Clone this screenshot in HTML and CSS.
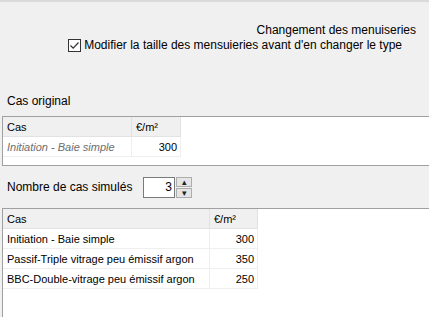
FILE: index.html
```html
<!DOCTYPE html>
<html lang="fr">
<head>
    <meta charset="UTF-8">
    <title>Changement des menuiseries</title>
    <link rel="stylesheet" href="styles.css">
</head>
<body>
    <div class="top">
        <div class="options">
            <div class="opt-title">Changement des menuiseries</div>
            <label class="check">
                <span class="box">
                    <svg width="11" height="11" viewBox="0 0 11 11"><path d="M1.5 5.5 L4.2 8.2 L9.5 2.5" fill="none" stroke="#333" stroke-width="1.2"/></svg>
                </span>
                Modifier la taille des mensuieries avant d'en changer le type
            </label>
        </div>
    </div>

    <div class="section-label">Cas original</div>
    <div class="grid grid-orig">
        <table>
            <tr><th class="c1">Cas</th><th class="c2">€/m²</th></tr>
            <tr><td class="c1 muted">Initiation - Baie simple</td><td class="c2 num">300</td></tr>
        </table>
    </div>

    <div class="count-row">
        <span class="count-label">Nombre de cas simulés</span>
        <span class="spin">
            <span class="spin-value">3</span>
            <span class="spin-btns">
                <span class="spin-btn">&#9652;</span>
                <span class="spin-btn">&#9662;</span>
            </span>
        </span>
    </div>

    <div class="grid grid-sim">
        <table>
            <tr><th class="c1">Cas</th><th class="c2">€/m²</th></tr>
            <tr><td class="c1">Initiation - Baie simple</td><td class="c2 num">300</td></tr>
            <tr><td class="c1">Passif-Triple vitrage peu émissif argon</td><td class="c2 num">350</td></tr>
            <tr><td class="c1">BBC-Double-vitrage peu émissif argon</td><td class="c2 num">250</td></tr>
        </table>
    </div>
</body>
</html>
```

FILE: styles.css
```css
body {
    margin: 0;
    background-color: #f0f0f0;
    font-family: "Liberation Sans", Arial, sans-serif;
    font-size: 12px;
    color: #000;
    height: 317px;
    overflow: hidden;
}
.top {
    border-top: 2px solid #dadada;
    height: 86px;
}
.options {
    display: flex;
    flex-direction: column;
    align-items: flex-end;
    padding-top: 21px;
    padding-right: 13px;
}
.opt-title {
    line-height: 14px;
}
.check {
    display: flex;
    align-items: center;
    gap: 3px;
    line-height: 16px;
    margin-right: 14px;
}
.box {
    width: 11px;
    height: 11px;
    border: 1px solid #333;
    background-color: #fff;
    display: flex;
}
.section-label {
    padding: 5px 7px 0;
    line-height: 16px;
    height: 23px;
}
.grid {
    background-color: #fff;
    border-top: 1px solid #a0a0a0;
    border-left: 1px solid #a0a0a0;
    margin-left: 2px;
}
.grid-orig {
    height: 48px;
    border-bottom: 1px solid #a0a0a0;
}
.grid-sim {
    height: 120px;
}
table {
    border-collapse: collapse;
    font-family: "Liberation Sans", Arial, sans-serif;
    font-size: 11px;
}
th, td {
    height: 19px;
    padding: 0 4px;
    text-align: left;
    font-weight: normal;
    white-space: nowrap;
}
th {
    background-color: #f0f0f0;
    border-right: 1px solid #e2e2e2;
    border-bottom: 1px solid #e2e2e2;
}
td {
    border-right: 1px solid #efefef;
    border-bottom: 1px solid #efefef;
}
.grid-orig .c1 { width: 120px; }
.grid-orig .c2 { width: 40px; }
.grid-sim .c1 { width: 198px; }
.grid-sim .c2 { width: 39px; }
.num {
    text-align: right;
    padding-right: 3px;
}
.muted {
    color: #6d6d6d;
    font-style: italic;
}
.count-row {
    display: flex;
    align-items: center;
    height: 42px;
    padding-left: 7px;
}
.count-label {
    width: 136px;
}
.spin {
    display: flex;
    gap: 1px;
}
.spin-value {
    width: 28px;
    height: 19px;
    border: 1px solid #7a7a7a;
    background-color: #fff;
    text-align: right;
    padding-right: 2px;
    line-height: 19px;
}
.spin-btns {
    display: flex;
    flex-direction: column;
    gap: 1px;
}
.spin-btn {
    width: 14px;
    height: 8px;
    border: 1px solid #adadad;
    background-color: #e5e5e5;
    font-size: 9px;
    line-height: 8px;
    text-align: center;
    color: #222;
}
```
